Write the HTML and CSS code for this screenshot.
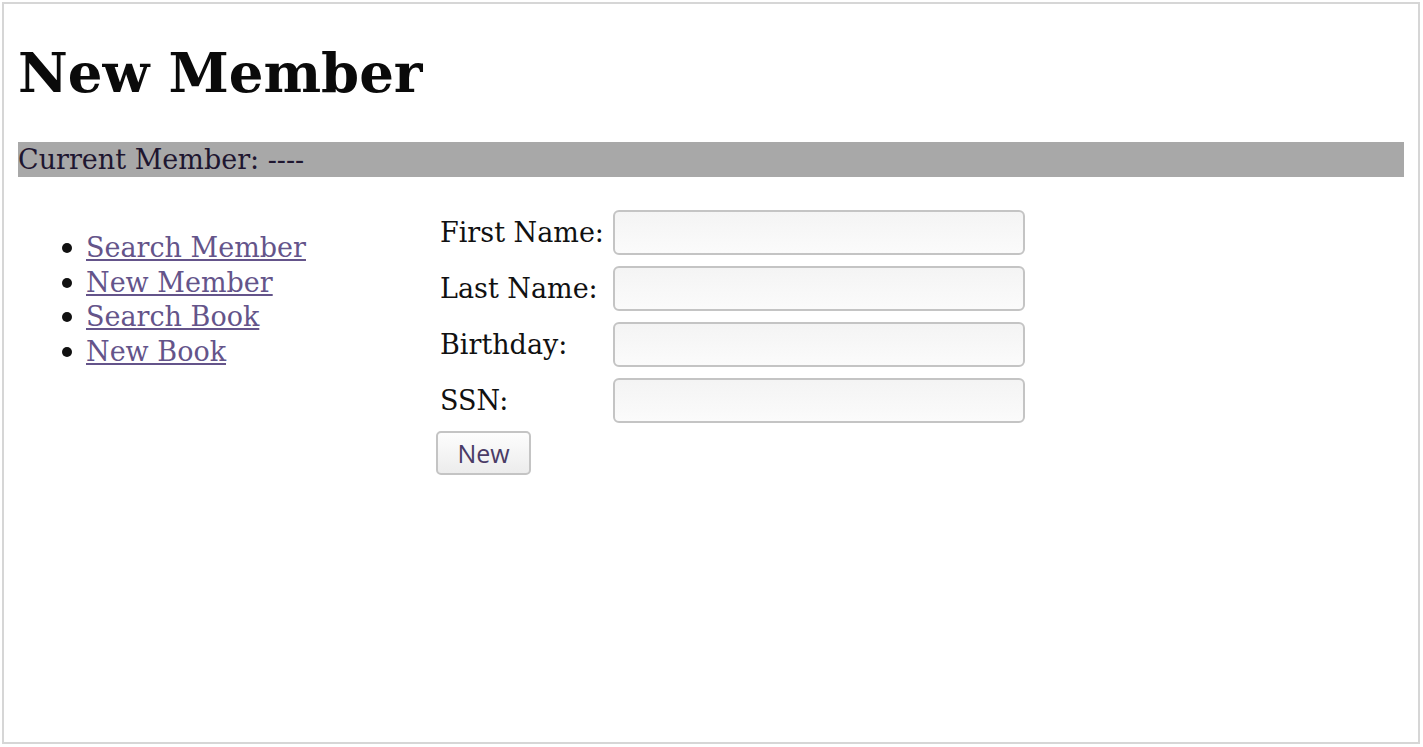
FILE: index.html
```html
<!DOCTYPE html>
<html lang="en">
<head>
<meta charset="utf-8">
<title>New Member</title>
<link rel="stylesheet" href="styles.css">
</head>
<body>
<div class="frame">
  <h1 class="title">New Member</h1>
  <div class="current-bar">Current Member: ----</div>
  <div class="main">
    <nav class="nav">
      <ul class="nav-list">
        <li><a href="#">Search Member</a></li>
        <li><a href="#">New Member</a></li>
        <li><a href="#">Search Book</a></li>
        <li><a href="#">New Book</a></li>
      </ul>
    </nav>
    <form class="member-form">
      <div class="row"><label class="label">First Name:</label><input class="field" type="text"></div>
      <div class="row"><label class="label">Last Name:</label><input class="field" type="text"></div>
      <div class="row"><label class="label">Birthday:</label><input class="field" type="text"></div>
      <div class="row"><label class="label">SSN:</label><input class="field" type="text"></div>
      <button class="btn" type="button">New</button>
    </form>
  </div>
</div>
</body>
</html>
```
FILE: styles.css
```css
html, body {
  margin: 0;
  padding: 0;
  background: #ffffff;
}
body {
  font-family: "DejaVu Serif", serif;
  color: #111111;
}
.frame {
  box-sizing: border-box;
  width: 1418px;
  height: 742px;
  margin: 2px;
  border: 2px solid #d6d6d6;
  padding: 0 14px;
}
.title {
  margin: 42px 0 0;
  font-size: 54.5px;
  line-height: 54px;
  font-weight: bold;
  color: #0a0a0a;
}
.current-bar {
  margin-top: 42px;
  height: 35px;
  line-height: 35px;
  background: #a8a8a8;
  font-size: 27px;
  color: #1e1630;
}
.main {
  display: flex;
  margin-top: 33px;
}
.nav {
  width: 422px;
  flex: none;
}
.nav-list {
  margin: 21px 0 0;
  padding-left: 68px;
  font-size: 27px;
  line-height: 34.5px;
  list-style: none;
}
.nav-list li::before {
  content: "";
  display: inline-block;
  width: 10px;
  height: 10px;
  border-radius: 50%;
  background: #111111;
  margin-left: -24px;
  margin-right: 14px;
  vertical-align: 4px;
}
.nav-list a {
  color: #64548a;
  text-decoration: underline;
}
.member-form {
  display: flex;
  flex-direction: column;
  align-items: flex-start;
}
.row {
  display: flex;
  margin-bottom: 11px;
}
.label {
  width: 173px;
  font-size: 27px;
  line-height: 45px;
  color: #111111;
}
.field {
  box-sizing: border-box;
  width: 412px;
  height: 45px;
  margin: 0;
  border: 2px solid #c4c4c4;
  border-radius: 6px;
  background: linear-gradient(#f4f4f4, #fbfbfb);
}
.btn {
  box-sizing: border-box;
  width: 95px;
  height: 44px;
  margin: -3px 0 0 -4px;
  border: 2px solid #c4c4c4;
  border-radius: 5px;
  background: linear-gradient(#fdfdfd, #ececec);
  font-family: "Open Sans", "DejaVu Sans", sans-serif;
  font-size: 25px;
  color: #4a3b66;
  padding: 0;
}
```
